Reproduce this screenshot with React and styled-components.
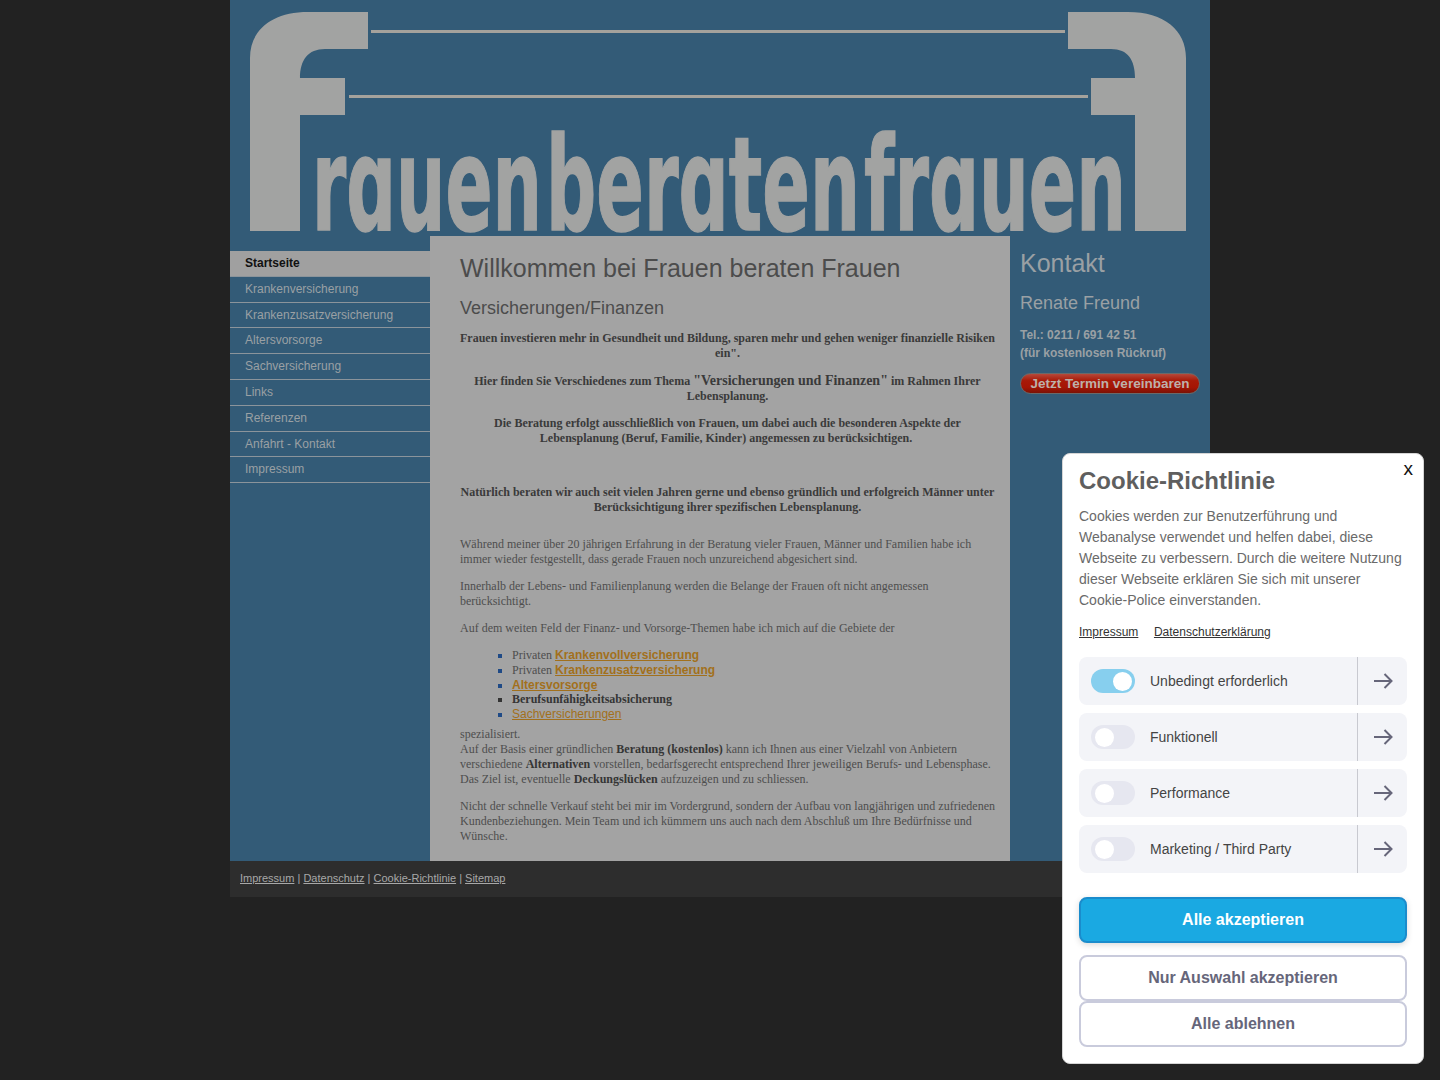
import React from 'react'
import styled, { createGlobalStyle } from 'styled-components'

const GlobalStyle = createGlobalStyle`
  html, body { margin: 0; padding: 0; }
  body {
    background: #222222;
    min-height: 1080px;
    font-family: "Liberation Sans", Arial, sans-serif;
  }
`

const navItems = ['Krankenversicherung', 'Krankenzusatzversicherung', 'Altersvorsorge', 'Sachversicherung', 'Links', 'Referenzen', 'Anfahrt - Kontakt', 'Impressum']
const cookieRows = [
  { label: 'Unbedingt erforderlich', on: true },
  { label: 'Funktionell' },
  { label: 'Performance' },
  { label: 'Marketing / Third Party' },
]

const Logo = () => (
  <LogoSvg viewBox="0 0 980 236" role="img" aria-label="Frauen beraten Frauen">
    <g fill="#a2a3a2">
      <path d="M20 231 V58 C20 30 42 12 78 12 H138 V49 H95 C78 49 70 60 70 78 H115 V115 H70 V231 Z" />
      <path d="M956 231 V58 C956 30 934 12 898 12 H838 V49 H881 C898 49 905 60 905 78 H861 V115 H905 V231 Z" />
      <rect x="141" y="30" width="694" height="3" fill="#a5a29c" />
      <rect x="119" y="95" width="739" height="3" fill="#a5a29c" />
      <LogoWord x="82" y="230" textLength="230" lengthAdjust="spacingAndGlyphs">rɑuen</LogoWord>
      <LogoWord x="316" y="230" textLength="314" lengthAdjust="spacingAndGlyphs">berɑten</LogoWord>
      <LogoWord x="634" y="230" textLength="262" lengthAdjust="spacingAndGlyphs">frɑuen</LogoWord>
    </g>
  </LogoSvg>
)

const RowArrowIcon = () => (
  <svg width="20" height="18" viewBox="0 0 20 18" fill="none" stroke="currentColor" strokeWidth="2">
    <path d="M1 9 H18.5 M11.5 2 L18.5 9 L11.5 16" />
  </svg>
)

const App = () => {
  return (
    <>
      <GlobalStyle />
      <Page>
        <Header><Logo /></Header>
        <Columns>
          <Nav>
            <NavItem $active>Startseite</NavItem>
            {navItems.map((item) => <NavItem key={item}>{item}</NavItem>)}
          </Nav>
          <Content>
            <Title>Willkommen bei Frauen beraten Frauen</Title>
            <SubTitle>Versicherungen/Finanzen</SubTitle>
            <Lead>Frauen investieren mehr in Gesundheit und Bildung, sparen mehr und gehen weniger finanzielle Risiken ein".</Lead>
            <Lead>Hier finden Sie Verschiedenes zum Thema <Big>"Versicherungen und Finanzen"</Big> im Rahmen Ihrer Lebensplanung.</Lead>
            <Lead>Die Beratung erfolgt ausschließlich von Frauen, um dabei auch die besonderen Aspekte der Lebensplanung (Beruf, Familie, Kinder) angemessen zu berücksichtigen.{'\u00a0'}</Lead>
            <Lead $top={39}>Natürlich beraten wir auch seit vielen Jahren gerne und ebenso gründlich und erfolgreich Männer unter Berücksichtigung ihrer spezifischen Lebensplanung.</Lead>
            <Para $top={22}>Während meiner über 20 jährigen Erfahrung in der Beratung vieler Frauen, Männer und Familien habe ich immer wieder festgestellt, dass gerade Frauen noch unzureichend abgesichert sind.</Para>
            <Para>Innerhalb der Lebens- und Familienplanung werden die Belange der Frauen oft nicht angemessen berücksichtigt.</Para>
            <Para>Auf dem weiten Feld der Finanz- und Vorsorge-Themen habe ich mich auf die Gebiete der</Para>
            <Topics>
              <Topic>Privaten <TopicLink $bold>Krankenvollversicherung</TopicLink></Topic>
              <Topic>Privaten <TopicLink $bold>Krankenzusatzversicherung</TopicLink></Topic>
              <Topic><TopicLink $bold>Altersvorsorge</TopicLink></Topic>
              <Topic $dark><strong>Berufsunfähigkeitsabsicherung</strong></Topic>
              <Topic><TopicLink>Sachversicherungen</TopicLink></Topic>
            </Topics>
            <Para $top={5}>spezialisiert.<br />Auf der Basis einer gründlichen <strong>Beratung (kostenlos)</strong> kann ich Ihnen aus einer Vielzahl von Anbietern verschiedene <strong>Alternativen</strong> vorstellen, bedarfsgerecht entsprechend Ihrer jeweiligen Berufs- und Lebensphase. Das Ziel ist, eventuelle <strong>Deckungslücken</strong> aufzuzeigen und zu schliessen.</Para>
            <Para>Nicht der schnelle Verkauf steht bei mir im Vordergrund, sondern der Aufbau von langjährigen und zufriedenen Kundenbeziehungen. Mein Team und ich kümmern uns auch nach dem Abschluß um Ihre Bedürfnisse und Wünsche.</Para>
          </Content>
          <Side>
            <SideTitle>Kontakt</SideTitle>
            <SideName>Renate Freund</SideName>
            <SidePhone>Tel.: 0211 / 691 42 51<br />(für kostenlosen Rückruf)</SidePhone>
            <TerminButton>Jetzt Termin vereinbaren</TerminButton>
          </Side>
        </Columns>
        <Footer>
          <FooterLink>Impressum</FooterLink> | <FooterLink>Datenschutz</FooterLink> | <FooterLink>Cookie-Richtlinie</FooterLink> | <FooterLink>Sitemap</FooterLink>
        </Footer>
      </Page>

      <CookieBox>
        <CloseX>x</CloseX>
        <CookieTitle>Cookie-Richtlinie</CookieTitle>
        <CookieText>Cookies werden zur Benutzerführung und Webanalyse verwendet und helfen dabei, diese Webseite zu verbessern. Durch die weitere Nutzung dieser Webseite erklären Sie sich mit unserer Cookie-Police einverstanden.</CookieText>
        <CookieLinks>
          <CookieLink>Impressum</CookieLink>
          <CookieLink>Datenschutzerklärung</CookieLink>
        </CookieLinks>
        <CookieRows>
          {cookieRows.map((row) => (
            <CookieRow key={row.label}>
              <RowMain>
                <Toggle $on={row.on}><Knob /></Toggle>
                <RowLabel>{row.label}</RowLabel>
              </RowMain>
              <RowArrow><RowArrowIcon /></RowArrow>
            </CookieRow>
          ))}
        </CookieRows>
        <PrimaryButton>Alle akzeptieren</PrimaryButton>
        <OutlineButton>Nur Auswahl akzeptieren</OutlineButton>
        <OutlineButton $flush>Alle ablehnen</OutlineButton>
      </CookieBox>
    </>
  )
}

export default App

const Page = styled.div`
  width: 980px;
  margin: 0 auto;
  opacity: 0.999;
`
const Header = styled.header`
  height: 236px;
  background: #335b77;
`
const LogoSvg = styled.svg`
  display: block;
  width: 980px;
  height: 236px;
  overflow: visible;
`
const LogoWord = styled.text`
  font-family: "DejaVu Sans", sans-serif;
  font-weight: 700;
  font-size: 130px;
  stroke: #a2a3a2;
  stroke-width: 1.5px;
`
const Columns = styled.div`
  display: grid;
  grid-template-columns: 200px 580px 200px;
  height: 625px;
  background: #335b77;
`
const Nav = styled.nav`
  padding-top: 15px;
`
const NavItem = styled.div`
  box-sizing: border-box;
  height: 25.8px;
  padding: 5px 0 0 15px;
  border-bottom: 1px solid #8b949b;
  font-size: 12px;
  line-height: 14px;
  color: ${(p) => (p.$active ? '#111111' : '#9aa0a4')};
  font-weight: ${(p) => (p.$active ? 700 : 400)};
  background: ${(p) => (p.$active ? '#a0a0a0' : 'transparent')};
`
const Content = styled.main`
  background: #a3a3a3;
  padding: 17px 15px 0 30px;
  font-family: "Liberation Serif", "Times New Roman", serif;
  font-size: 12px;
  line-height: 15px;
  color: #4e4e4e;
  overflow: hidden;

  strong { color: #353535; }
`
const Title = styled.h1`
  margin: 0;
  font-family: "Liberation Sans", Arial, sans-serif;
  font-weight: 400;
  font-size: 25px;
  line-height: 30px;
  color: #4c4c4c;
`
const SubTitle = styled.h2`
  margin: 14px 0 11px;
  font-family: "Liberation Sans", Arial, sans-serif;
  font-weight: 400;
  font-size: 18px;
  line-height: 22px;
  color: #4c4c4c;
`
const Lead = styled.p`
  margin: ${(p) => p.$top ?? 12}px 0 0;
  text-align: center;
  font-weight: 700;
  color: #3a3a3a;
`
const Big = styled.span`
  font-size: 14px;
`
const Para = styled.p`
  margin: ${(p) => p.$top ?? 12}px 0 0;
`
const Topics = styled.ul`
  margin: 12px 0 0;
  padding-left: 52px;
  list-style: square;
`
const Topic = styled.li`
  line-height: 14.75px;
  &::marker { color: ${(p) => (p.$dark ? '#333333' : '#1f4a86')}; }
`
const TopicLink = styled.a`
  font-family: "Liberation Sans", Arial, sans-serif;
  font-weight: ${(p) => (p.$bold ? 700 : 400)};
  color: #a2701c;
  text-decoration: underline;
`
const Side = styled.aside`
  padding: 12px 10px 0;
  color: #9aa0a4;
`
const SideTitle = styled.h2`
  margin: 0;
  font-weight: 400;
  font-size: 25px;
  line-height: 30px;
`
const SideName = styled.h3`
  margin: 14px 0 0;
  font-weight: 400;
  font-size: 18px;
  line-height: 22px;
`
const SidePhone = styled.p`
  margin: 12px 0 0;
  font-size: 12px;
  font-weight: 700;
  line-height: 18px;
`
const TerminButton = styled.div`
  box-sizing: border-box;
  width: 180px;
  height: 21px;
  margin-top: 11px;
  border-radius: 11px;
  border: 1px solid #6a6a6a;
  background: linear-gradient(#b5493a 0%, #a81a08 35%, #a51504 70%, #7a1206 100%);
  color: #bdb0aa;
  font-weight: 700;
  font-size: 13.5px;
  line-height: 20px;
  text-align: center;
  white-space: nowrap;
`
const Footer = styled.footer`
  box-sizing: border-box;
  height: 36px;
  padding: 0 10px;
  background: #2d2d2d;
  font-size: 11px;
  line-height: 34px;
  color: #a8a8a8;
`
const FooterLink = styled.a`
  color: #a8a8a8;
  text-decoration: underline;
`
const CookieBox = styled.section`
  position: fixed;
  top: 453px;
  left: 1062px;
  box-sizing: border-box;
  width: 362px;
  height: 611px;
  padding: 12px 16px 0;
  background: #ffffff;
  border: 1px solid #d5d5d5;
  border-radius: 8px;
  opacity: 0.999;
`
const CloseX = styled.span`
  position: absolute;
  top: 5px;
  right: 10px;
  font-size: 19px;
  line-height: 20px;
  color: #111111;
`
const CookieTitle = styled.h2`
  margin: 0;
  font-size: 24px;
  line-height: 30px;
  font-weight: 700;
  color: #5f5f5f;
`
const CookieText = styled.p`
  margin: 10px 0 0;
  font-size: 14px;
  line-height: 21px;
  color: #6a6a6a;
`
const CookieLinks = styled.div`
  display: flex;
  gap: 15.6px;
  margin-top: 13px;
`
const CookieLink = styled.a`
  font-size: 12px;
  line-height: 16px;
  color: #333333;
  text-decoration: underline;
`
const CookieRows = styled.div`
  display: flex;
  flex-direction: column;
  gap: 8px;
  margin: 17px 0 24px;
`
const CookieRow = styled.div`
  display: flex;
  height: 48px;
  border-radius: 8px;
  background: #f3f4f8;
`
const RowMain = styled.div`
  flex: 1;
  display: flex;
  align-items: center;
  gap: 15px;
  padding-left: 12px;
`
const Toggle = styled.div`
  display: flex;
  align-items: center;
  justify-content: ${(p) => (p.$on ? 'flex-end' : 'flex-start')};
  box-sizing: border-box;
  width: 44px;
  height: 24px;
  padding: 0 ${(p) => (p.$on ? 3 : 4)}px;
  border-radius: 12px;
  background: ${(p) => (p.$on ? '#87cfee' : '#e6e7f0')};
`
const Knob = styled.span`
  display: block;
  width: 19px;
  height: 19px;
  border-radius: 50%;
  background: #ffffff;
`
const RowLabel = styled.span`
  font-size: 14px;
  color: #444444;
`
const RowArrow = styled.div`
  display: flex;
  align-items: center;
  justify-content: center;
  width: 49px;
  border-left: 1px solid #c8c9d0;
  color: #66667a;
`
const PrimaryButton = styled.div`
  box-sizing: border-box;
  height: 46px;
  border: 2px solid #1a8ccc;
  border-radius: 8px;
  background: #1aa9e2;
  box-shadow: 0 2px 6px rgba(0, 0, 0, 0.15);
  color: #ffffff;
  font-size: 16px;
  font-weight: 700;
  line-height: 42px;
  text-align: center;
`
const OutlineButton = styled.div`
  box-sizing: border-box;
  height: 46px;
  margin-top: ${(p) => (p.$flush ? 0 : 12)}px;
  border: 2px solid #c9cbdc;
  border-radius: 8px;
  background: #ffffff;
  color: #66667a;
  font-size: 16px;
  font-weight: 700;
  line-height: 42px;
  text-align: center;
`
